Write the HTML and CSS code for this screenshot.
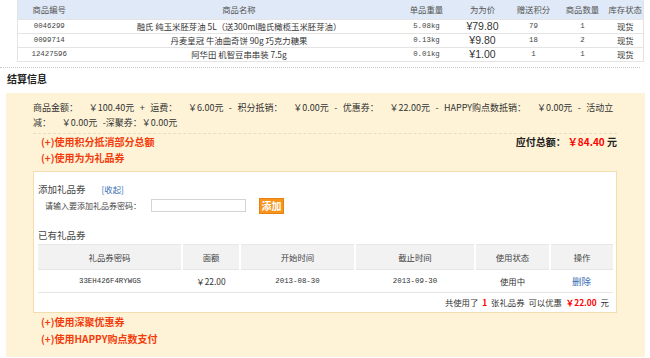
FILE: index.html
```html
<!DOCTYPE html>
<html lang="zh-CN">
<head>
<meta charset="utf-8">
<title>结算信息</title>
<link rel="stylesheet" href="styles.css">
</head>
<body>
<div class="goods">
  <table class="goods-table">
    <colgroup>
      <col class="c1"><col class="c2"><col class="c3"><col class="c4"><col class="c5"><col class="c6"><col class="c7">
    </colgroup>
    <thead>
      <tr><th>商品编号</th><th>商品名称</th><th>单品重量</th><th>为为价</th><th>赠送积分</th><th>商品数量</th><th>库存状态</th></tr>
    </thead>
    <tbody>
      <tr><td class="num">0046299</td><td>融氏 纯玉米胚芽油 5L（送300ml融氏橄榄玉米胚芽油）</td><td class="num">5.08kg</td><td class="price">¥79.80</td><td class="num">79</td><td class="num">1</td><td>现货</td></tr>
      <tr><td class="num">0099714</td><td>丹麦皇冠 牛油曲奇饼 90g 巧克力糖果</td><td class="num">0.13kg</td><td class="price">¥9.80</td><td class="num">18</td><td class="num">2</td><td>现货</td></tr>
      <tr><td class="num">12427596</td><td>阿华田 机智豆串串装 7.5g</td><td class="num">0.01kg</td><td class="price">¥1.00</td><td class="num">1</td><td class="num">1</td><td>现货</td></tr>
    </tbody>
  </table>
</div>
<div class="dots"></div>
<h3 class="title">结算信息</h3>
<div class="panel">
  <p class="sum">商品金额：  ￥100.40元 + 运费：  ￥6.00元 - 积分抵销：  ￥0.00元 - 优惠券：  ￥22.00元 - HAPPY购点数抵销：  ￥0.00元 - 活动立<br>减：  ￥0.00元 -深聚券：￥0.00元</p>
  <div class="opts">
    <div class="links">
      <div class="plus">(+)使用积分抵消部分总额</div>
      <div class="plus">(+)使用为为礼品券</div>
    </div>
    <div class="total">应付总额：<span class="amount">￥84.40</span> 元</div>
  </div>
  <div class="coupon">
    <div class="sec-title">添加礼品券<a class="toggle" href="#">[收起]</a></div>
    <div class="add-row">
      <span class="label">请输入要添加礼品券密码：</span>
      <input class="code-input" type="text">
      <button class="add-btn" type="button">添加</button>
    </div>
    <div class="sec-title own">已有礼品券</div>
    <table class="ctable">
      <colgroup>
        <col class="k1"><col class="k2"><col class="k3"><col class="k4"><col class="k5"><col class="k6">
      </colgroup>
      <thead>
        <tr><th>礼品券密码</th><th>面额</th><th>开始时间</th><th>截止时间</th><th>使用状态</th><th>操作</th></tr>
      </thead>
      <tbody>
        <tr><td class="num">33EH426F4RYWGS</td><td>￥22.00</td><td class="num">2013-08-30</td><td class="num">2013-09-30</td><td>使用中</td><td><a class="del" href="#">删除</a></td></tr>
      </tbody>
    </table>
    <div class="used">共使用了 <b class="red">1</b> 张礼品券 可以优惠 <b class="red">￥22.00</b> 元</div>
  </div>
  <div class="plus">(+)使用深聚优惠券</div>
  <div class="plus">(+)使用HAPPY购点数支付</div>
</div>
</body>
</html>
```
FILE: styles.css
```css
* { box-sizing: border-box; }
body {
  margin: 0;
  font-family: "Noto Sans CJK SC", sans-serif;
  font-size: 8.4px;
  color: #333;
  background: #fff;
}
.goods { padding: 0 7px 0 17px; }
.goods-table {
  width: 626px;
  border-collapse: collapse;
  table-layout: fixed;
}
.c1 { width: 63px; }
.c2 { width: 317px; }
.c3 { width: 58px; }
.c4 { width: 54px; }
.c5 { width: 48px; }
.c6 { width: 50px; }
.c7 { width: 36px; }
.goods-table th {
  height: 19px;
  padding: 0;
  background: #dfe9f7;
  color: #555;
  font-weight: normal;
  text-align: center;
  white-space: nowrap;
}
.goods-table td {
  height: 14px;
  padding: 0;
  text-align: center;
  white-space: nowrap;
  border-top: 1px solid #e4e4e4;
  border-bottom: 1px solid #e4e4e4;
  line-height: 12px;
}
.goods-table tr > *:first-child { border-left: 1px solid #e4e4e4; }
.goods-table tr > *:last-child { border-right: 1px solid #e4e4e4; }
.num {
  font-family: "Liberation Mono", monospace;
  font-size: 7.4px;
  color: #444;
}
.price {
  font-family: "Liberation Sans", sans-serif;
  font-size: 10.5px;
  color: #333;
}
.dots {
  margin: 5px 10px 0 0;
  border-top: 1px dotted #c8c8c8;
}
.title {
  margin: 4px 0 7px 7px;
  font-size: 10px;
  line-height: 14px;
  font-weight: bold;
  color: #222;
}
.panel {
  margin: 0 5px 0 6px;
  padding: 7px 28px 10px 27px;
  background: #fef3d7;
}
.sum {
  margin: 0;
  line-height: 15px;
  font-size: 9px;
  color: #333;
  white-space: pre;
  word-spacing: 3.4px;
}
.opts {
  margin-top: 3px;
  border-top: 1px dashed #eddcb6;
  display: flex;
  justify-content: space-between;
}
.plus {
  padding-left: 8px;
  font-size: 10px;
  line-height: 16px;
  font-weight: bold;
  color: #f33c0c;
}
.panel > .plus { line-height: 17px; }
.total {
  font-size: 10px;
  line-height: 16px;
  font-weight: bold;
  color: #222;
}
.amount { color: #f00; margin-left: 2px; }
.coupon {
  margin-top: 5px;
  background: #fff;
  border: 1px solid #f1ddb0;
  padding: 10px 4px 3px 4px;
}
.sec-title {
  font-size: 9.5px;
  line-height: 14px;
  color: #444;
}
.toggle {
  margin-left: 16px;
  color: #3a6fb5;
  text-decoration: none;
  font-size: 8.4px;
}
.add-row {
  margin-top: 2px;
  padding-left: 7px;
  height: 16px;
  display: flex;
  align-items: center;
}
.label { color: #444; font-size: 8px; }
.code-input {
  margin: 0 0 0 10px;
  width: 95px;
  height: 13px;
  padding: 0;
  border: 1px solid #d4d4d4;
  background: #fff;
}
.add-btn {
  margin-left: 13px;
  width: 25px;
  height: 16px;
  padding: 0;
  border: 1px solid #e9820e;
  background: #f7941d;
  color: #fff;
  font-family: "Noto Sans CJK SC", sans-serif;
  font-size: 10px;
  font-weight: bold;
  line-height: 14px;
}
.own { margin-top: 14px; }
.ctable {
  margin-top: 2px;
  width: 575px;
  border-collapse: collapse;
  table-layout: fixed;
}
.k1 { width: 144px; }
.k2 { width: 58px; }
.k3 { width: 115px; }
.k4 { width: 120px; }
.k5 { width: 75px; }
.k6 { width: 63px; }
.ctable th {
  height: 25px;
  padding: 0;
  background: #f2f2f2;
  color: #444;
  font-weight: normal;
  text-align: center;
  border-top: 1px solid #e8e8e8;
  border-bottom: 1px solid #e6e6e6;
  border-left: 2px solid #fff;
}
.ctable th:first-child { border-left: 0; }
.ctable td {
  height: 23px;
  padding: 0;
  text-align: center;
  color: #333;
  border-bottom: 1px solid #e6e6e6;
}
.del {
  color: #3a6fb5;
  text-decoration: none;
  font-size: 9.5px;
}
.used {
  margin-top: 2px;
  padding-right: 3px;
  text-align: right;
  line-height: 14px;
  color: #333;
  word-spacing: 2px;
}
.red { color: #f00; font-weight: bold; }
```
